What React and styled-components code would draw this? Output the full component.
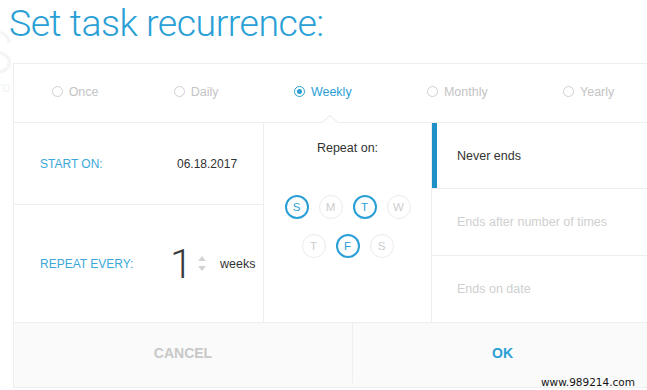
import React from "react";
import styled, { createGlobalStyle, css } from "styled-components";

const BLUE = "#2a9fd6";

const Global = createGlobalStyle`
  html, body { margin: 0; padding: 0; background: #fff; }
  body { font-family: "Liberation Sans", Arial, sans-serif; overflow: hidden; }
  * { box-sizing: border-box; }
`;

const Page = styled.div`
  position: relative;
  width: 647px;
  height: 390px;
  overflow: hidden;
  padding: 0 0 0 13px;
`;

const Ghost = styled.div`
  position: absolute;
  left: -22px;
  top: 28px;
  font-family: Roboto, sans-serif;
  font-weight: 300;
  font-size: 60px;
  line-height: 50px;
  color: #f5f5f5;
  z-index: 0;
`;

const GhostSmall = styled.div`
  position: absolute;
  left: -3px;
  top: 80px;
  font-family: Roboto, sans-serif;
  font-size: 15px;
  line-height: 15px;
  color: #eef5f9;
  z-index: 0;
`;

const Title = styled.h1`
  position: relative;
  z-index: 1;
  margin: 0 0 0 -4px;
  height: 63px;
  padding-top: 0;
  font-family: Roboto, sans-serif;
  font-weight: 300;
  font-size: 37.5px;
  letter-spacing: -0.5px;
  line-height: 46px;
  color: ${BLUE};
`;

const Card = styled.div`
  position: relative;
  z-index: 1;
  width: 640px;
  background: #fff;
  border: 1px solid #eeeeee;
  display: flex;
  flex-direction: column;
`;

const Tabs = styled.div`
  position: relative;
  height: 59px;
  padding-bottom: 3px;
  display: flex;
  align-items: center;
  justify-content: space-around;
  border-bottom: 1px solid #eeeeee;
`;

const Notch = styled.svg`
  position: absolute;
  left: 308px;
  bottom: -1px;
`;

const Tab = styled.div`
  display: flex;
  align-items: center;
  gap: 6px;
  font-size: 12.5px;
  color: ${(p) => (p.$active ? BLUE : "#c4c4c4")};
`;

const Radio = styled.span`
  width: 11px;
  height: 11px;
  border-radius: 50%;
  border: 1px solid ${(p) => (p.$active ? BLUE : "#cfcfcf")};
  display: flex;
  align-items: center;
  justify-content: center;
  &::after {
    content: "";
    display: ${(p) => (p.$active ? "block" : "none")};
    width: 5px;
    height: 5px;
    border-radius: 50%;
    background: ${BLUE};
  }
`;

const Body = styled.div`
  display: grid;
  grid-template-columns: 250px 168px 1fr;
  height: 200px;
  border-bottom: 1px solid #eeeeee;
`;

const LeftCol = styled.div`
  display: grid;
  grid-template-rows: 82px 1fr;
  border-right: 1px solid #eeeeee;
`;

const FieldRow = styled.div`
  display: flex;
  align-items: center;
  padding-left: 26px;
  ${(p) => p.$divider && css`border-bottom: 1px solid #eeeeee;`}
`;

const Label = styled.div`
  width: ${(p) => p.$w}px;
  font-size: 12px;
  color: #3ba8d9;
  text-transform: uppercase;
`;

const Value = styled.div`
  font-size: 12px;
  color: #333;
`;

const BigNumber = styled.div`
  font-family: Roboto, sans-serif;
  font-weight: 300;
  font-size: 41px;
  line-height: 41px;
  color: #3a3a3a;
  width: 22px;
  margin-top: 1px;
`;

const Spinner = styled.div`
  display: flex;
  flex-direction: column;
  gap: 5px;
  margin-left: 6px;
  margin-right: 14px;
`;

const Arrow = styled.span`
  width: 0;
  height: 0;
  border-left: 4px solid transparent;
  border-right: 4px solid transparent;
  ${(p) =>
    p.$up
      ? css`border-bottom: 5px solid #d4d4d4;`
      : css`border-top: 5px solid #d4d4d4;`}
`;

const Unit = styled.div`
  font-size: 12.5px;
  color: #333;
`;

const MidCol = styled.div`
  display: flex;
  flex-direction: column;
  align-items: center;
  border-right: 1px solid #eeeeee;
  padding-top: 18px;
`;

const SubTitle = styled.div`
  font-size: 12.5px;
  color: #333;
`;

const Days = styled.div`
  margin-top: 40px;
  display: flex;
  flex-direction: column;
  align-items: center;
  gap: 15px;
`;

const DayRow = styled.div`
  display: flex;
  gap: 10px;
`;

const Day = styled.div`
  width: 24px;
  height: 24px;
  border-radius: 50%;
  display: flex;
  align-items: center;
  justify-content: center;
  font-size: 11.5px;
  ${(p) =>
    p.$on
      ? css`border: 2px solid ${BLUE}; color: ${BLUE};`
      : css`border: 1px solid #ebebeb; color: #cdcdcd;`}
`;

const RightCol = styled.div`
  display: grid;
  grid-template-rows: 66px 67px 1fr;
`;

const EndOption = styled.div`
  position: relative;
  display: flex;
  align-items: center;
  padding-left: 25px;
  font-size: 12.5px;
  color: ${(p) => (p.$active ? "#333" : "#cfcfcf")};
  ${(p) => p.$divider && css`border-bottom: 1px solid #eeeeee;`}
  ${(p) =>
    p.$active &&
    css`
      &::before {
        content: "";
        position: absolute;
        left: 0;
        top: 0;
        bottom: 0;
        width: 5px;
        background: #1e90c8;
      }
    `}
`;

const Footer = styled.div`
  display: grid;
  grid-template-columns: 339px 1fr;
  height: 64px;
  padding-bottom: 4px;
  background: #fafafa;
`;

const FooterButton = styled.button`
  border: none;
  background: transparent;
  font-family: "Liberation Sans", Arial, sans-serif;
  font-weight: bold;
  font-size: 14px;
  color: ${(p) => (p.$primary ? BLUE : "#c8c8c8")};
  ${(p) => !p.$primary && css`border-right: 1px solid #eeeeee;`}
  padding: 0;
  cursor: pointer;
`;

const Watermark = styled.div`
  position: absolute;
  right: 12px;
  bottom: 2px;
  z-index: 2;
  font-family: "DejaVu Sans", sans-serif;
  font-size: 10.5px;
  color: #111;
  text-shadow: 0 0 2px #fff, 0 0 2px #fff;
`;

const tabs = ["Once", "Daily", "Weekly", "Monthly", "Yearly"];
const dayRows = [
  [
    { l: "S", on: true },
    { l: "M", on: false },
    { l: "T", on: true },
    { l: "W", on: false },
  ],
  [
    { l: "T", on: false },
    { l: "F", on: true },
    { l: "S", on: false },
  ],
];
const endings = ["Never ends", "Ends after number of times", "Ends on date"];

export default function App() {
  return (
    <>
      <Global />
      <Page>
        <Ghost>S</Ghost>
        <GhostSmall>ro</GhostSmall>
        <Title>Set task recurrence:</Title>
        <Card>
          <Tabs>
            {tabs.map((t) => (
              <Tab key={t} $active={t === "Weekly"}>
                <Radio $active={t === "Weekly"} />
                {t}
              </Tab>
            ))}
            <Notch width="16" height="8" viewBox="0 0 16 8">
              <polyline points="0,7.5 8,0.5 16,7.5" fill="#fff" stroke="#e6e6e6" strokeWidth="1" />
              <rect x="0" y="7.5" width="16" height="1" fill="#fff" />
            </Notch>
          </Tabs>
          <Body>
            <LeftCol>
              <FieldRow $divider>
                <Label $w={137}>Start on:</Label>
                <Value>06.18.2017</Value>
              </FieldRow>
              <FieldRow>
                <Label $w={130}>Repeat every:</Label>
                <BigNumber>1</BigNumber>
                <Spinner>
                  <Arrow $up />
                  <Arrow />
                </Spinner>
                <Unit>weeks</Unit>
              </FieldRow>
            </LeftCol>
            <MidCol>
              <SubTitle>Repeat on:</SubTitle>
              <Days>
                {dayRows.map((row, i) => (
                  <DayRow key={i}>
                    {row.map((d, j) => (
                      <Day key={j} $on={d.on}>
                        {d.l}
                      </Day>
                    ))}
                  </DayRow>
                ))}
              </Days>
            </MidCol>
            <RightCol>
              {endings.map((e, i) => (
                <EndOption key={e} $active={i === 0} $divider={i < 2}>
                  {e}
                </EndOption>
              ))}
            </RightCol>
          </Body>
          <Footer>
            <FooterButton>CANCEL</FooterButton>
            <FooterButton $primary>OK</FooterButton>
          </Footer>
        </Card>
        <Watermark>www.989214.com</Watermark>
      </Page>
    </>
  );
}
